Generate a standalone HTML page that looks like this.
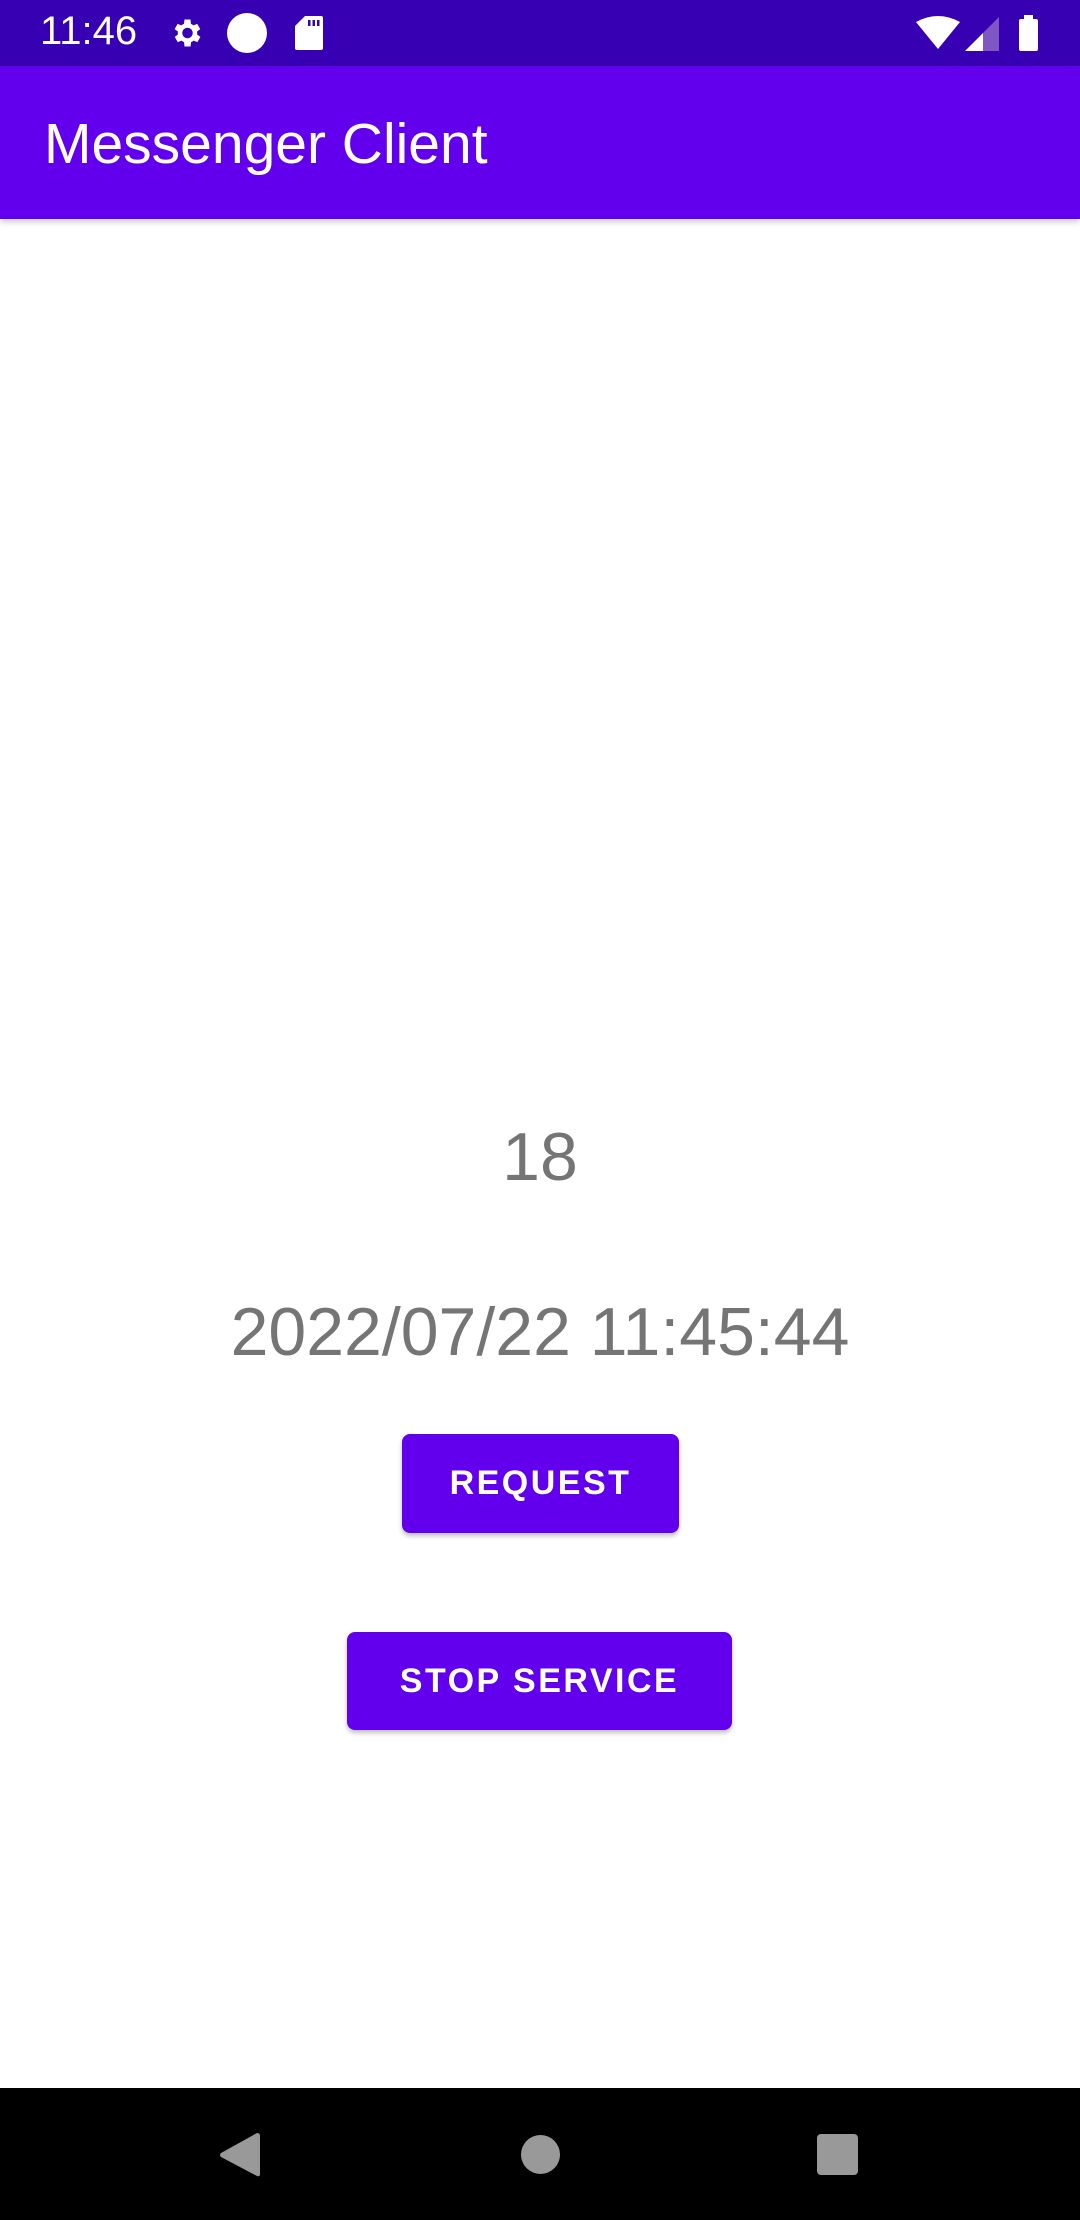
<!DOCTYPE html>
<html><head><meta charset="utf-8"><style>
*{margin:0;padding:0;box-sizing:border-box}
body{width:1080px;height:2220px;background:#fff;position:relative;overflow:hidden;font-family:"Liberation Sans",sans-serif}
.sb{position:absolute;left:0;top:0;width:1080px;height:66px;background:#3700b3}
.ab{position:absolute;left:0;top:66px;width:1080px;height:153px;background:#6200ee;box-shadow:0 3px 6px rgba(0,0,0,.2)}
.t{position:absolute;color:#fff}
.num{position:absolute;left:0;width:1080px;text-align:center;color:#757575;font-size:68px}
.btn{position:absolute;background:#6200ee;color:#fff;border-radius:8px;box-shadow:0 3px 5px rgba(0,0,0,.25);font-size:34px;font-weight:bold;letter-spacing:2.5px;display:flex;align-items:center;justify-content:center}
.nb{position:absolute;left:0;top:2088px;width:1080px;height:132px;background:#000}
</style></head><body>
<div class="sb">
<div class="t" style="left:40px;top:9px;font-size:40px">11:46</div>
<svg style="position:absolute;left:168px;top:15px" width="36" height="36" viewBox="0 0 24 24"><path fill="#fff" d="M19.4 13a7.5 7.5 0 000-2l2.1-1.6-2-3.5-2.5 1a7 7 0 00-1.7-1L15 3h-4l-.4 2.9a7 7 0 00-1.7 1l-2.5-1-2 3.5L6.6 11a7.5 7.5 0 000 2l-2.1 1.6 2 3.5 2.5-1a7 7 0 001.7 1L11 21h4l.4-2.9a7 7 0 001.7-1l2.5 1 2-3.5zM13 15.5a3.5 3.5 0 110-7 3.5 3.5 0 010 7z"/></svg>
<div style="position:absolute;left:227px;top:13px;width:40px;height:40px;border-radius:50%;background:#fff"></div>
<svg style="position:absolute;left:295px;top:16px" width="28" height="34" viewBox="0 0 28 34"><path fill="#fff" d="M10 0h16a2 2 0 012 2v30a2 2 0 01-2 2H2a2 2 0 01-2-2V10z"/><rect x="13" y="4" width="2.5" height="6" fill="#3700b3"/><rect x="17.5" y="4" width="2.5" height="6" fill="#3700b3"/><rect x="22" y="4" width="2.5" height="6" fill="#3700b3"/></svg>
<svg style="position:absolute;left:916px;top:16px" width="44" height="33" viewBox="0 0 44 33"><path fill="#fff" d="M0 6Q22-6 44 6L22 33z"/></svg>
<svg style="position:absolute;left:965px;top:17px" width="34" height="34" viewBox="0 0 34 34"><path fill="#7e57c2" d="M34 0V34H18V16z"/><path fill="#fff" d="M18 16V34H0z"/></svg>
<div style="position:absolute;left:1019px;top:19px;width:19px;height:32px;background:#fff;border-radius:2px"></div>
<div style="position:absolute;left:1024px;top:15px;width:9px;height:5px;background:#fff"></div>
</div>
<div class="ab"><div class="t" style="left:44px;top:45px;font-size:57px">Messenger Client</div></div>
<div class="num" style="top:1118px">18</div>
<div class="num" style="top:1293px">2022/07/22 11:45:44</div>
<div class="btn" style="left:402px;top:1434px;width:277px;height:99px">REQUEST</div>
<div class="btn" style="left:347px;top:1632px;width:385px;height:98px">STOP SERVICE</div>
<div class="nb">
<svg style="position:absolute;left:220px;top:45px" width="40" height="44" viewBox="0 0 40 44"><path fill="#999" d="M37 0Q40 0 40 3V41Q40 44 37 43L1 24Q-1 22 1 20Z"/></svg>
<div style="position:absolute;left:521px;top:47px;width:39px;height:39px;border-radius:50%;background:#999"></div>
<div style="position:absolute;left:817px;top:46px;width:41px;height:41px;border-radius:4px;background:#999"></div>
</div>
</body></html>
